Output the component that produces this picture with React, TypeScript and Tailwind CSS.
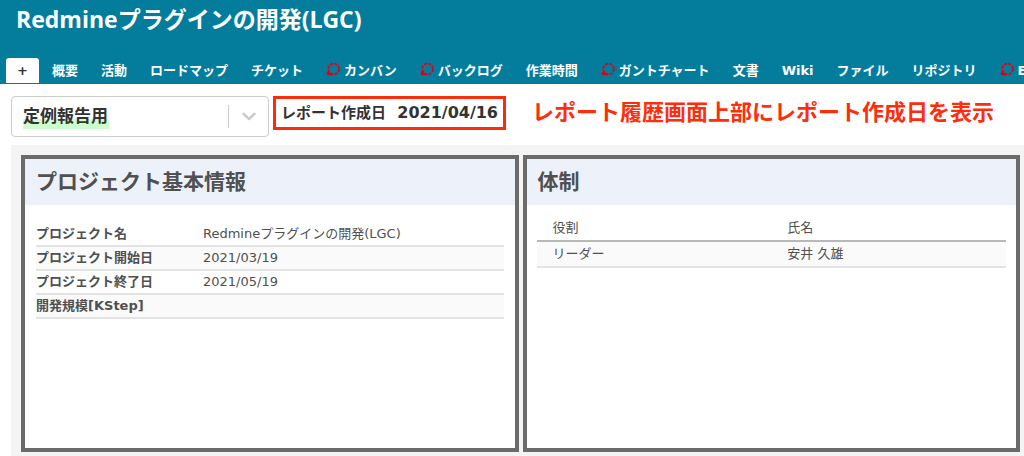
import clsx from 'clsx';
import type { ReactNode } from 'react';

interface MenuItem {
  label: string;
  marked?: boolean;
}

const menuItems: MenuItem[] = [
  { label: '概要' },
  { label: '活動' },
  { label: 'ロードマップ' },
  { label: 'チケット' },
  { label: 'カンバン', marked: true },
  { label: 'バックログ', marked: true },
  { label: '作業時間' },
  { label: 'ガントチャート', marked: true },
  { label: '文書' },
  { label: 'Wiki' },
  { label: 'ファイル' },
  { label: 'リポジトリ' },
  { label: 'EVM', marked: true },
];

const projectInfo = [
  { name: 'プロジェクト名', value: 'Redmineプラグインの開発(LGC)' },
  { name: 'プロジェクト開始日', value: '2021/03/19' },
  { name: 'プロジェクト終了日', value: '2021/05/19' },
  { name: '開発規模[KStep]', value: '' },
];

const members = [{ role: 'リーダー', name: '安井 久雄' }];

// プラグインのロゴ
function PluginMark() {
  return (
    <svg width="14" height="14" viewBox="0 0 14 14" fill="none" className="-mt-1 shrink-0" aria-hidden="true">
      <circle cx="7.6" cy="7" r="5.4" stroke="#e0000f" strokeWidth="1.8" strokeDasharray="2.95 1.29" />
      <path d="M0.6 10.4 L3.6 9.8 L5.6 12.4 L5 13.4 L1 13 Z" fill="#e0000f" />
    </svg>
  );
}

function Panel({ title, children }: { title: string; children: ReactNode }) {
  return (
    <section className="border-4 border-[#6b6b6b] bg-white">
      <h3 className="bg-[#edf1f9] px-[11px] py-2 text-[21px] leading-[30px] font-bold">{title}</h3>
      {children}
    </section>
  );
}

export default function App() {
  return (
    <div className="flex min-h-screen flex-col overflow-hidden bg-white font-['DejaVu_Sans','Noto_Sans_CJK_JP',sans-serif] text-[13px] text-[#505050]">
      {/* ヘッダー */}
      <header className="bg-[#047d9d] text-white">
        <h1 className="px-4 pt-1 pb-6 font-['Open_Sans','Noto_Sans_CJK_JP',sans-serif] text-[23px] leading-[30px] font-bold whitespace-nowrap">
          Redmineプラグインの開発(LGC)
        </h1>
        <nav className="flex items-end gap-[13px] overflow-hidden pl-1.5 font-bold">
          <button
            type="button"
            aria-label="追加"
            className="mb-px h-[25px] w-[33px] shrink-0 rounded-t-[3px] bg-white text-[#333]"
          >
            +
          </button>
          <ul className="flex gap-[23px]">
            {menuItems.map((item) => (
              <li key={item.label} className="shrink-0">
                <a href="#" className="flex h-[26px] items-center gap-1 whitespace-nowrap">
                  {item.marked && <PluginMark />}
                  {item.label}
                </a>
              </li>
            ))}
          </ul>
        </nav>
      </header>

      {/* レポート選択 */}
      <div className="flex items-start gap-1 overflow-hidden pt-3 pb-2 pl-[11px] whitespace-nowrap">
        <div className="relative w-[258px] shrink-0 rounded-[4px] border border-[#ccc]">
          <span className="absolute bottom-[7px] left-[11px] h-[10px] w-[86px] bg-[#ccffcc]" />
          <select
            aria-label="レポート"
            className="relative h-[39px] w-full appearance-none bg-transparent pl-[11px] text-[17px] font-bold text-[#333] outline-none"
          >
            <option>定例報告用</option>
          </select>
          <span className="pointer-events-none absolute inset-y-2 right-0 flex w-10 items-center justify-center border-l border-[#ccc]">
            <svg width="14" height="9" viewBox="0 0 14 9" fill="none" aria-hidden="true">
              <path d="M1.5 1.8 L7 7 L12.5 1.8" stroke="#ccc" strokeWidth="2.6" strokeLinecap="round" strokeLinejoin="round" />
            </svg>
          </span>
        </div>
        <p className="flex h-[34px] w-[233px] shrink-0 items-center justify-between border-[3px] border-[#fa2c0b] px-[5px] font-bold text-[#333]">
          <span className="text-[15px]">レポート作成日</span>
          <span className="text-base">2021/04/16</span>
        </p>
        <p className="pl-[22px] text-[22px] leading-[34px] font-bold text-[#ff2d0a]">
          レポート履歴画面上部にレポート作成日を表示
        </p>
      </div>

      {/* レポート本体 */}
      <main className="ml-[11px] grid flex-1 grid-cols-2 gap-1 bg-[#f4f4f4] pt-[10px] pr-1 pb-1 pl-[10px]">
        <Panel title="プロジェクト基本情報">
          <div className="px-[11px] pt-[17px]">
            <table className="w-full table-fixed border-collapse text-left">
              <tbody>
                {projectInfo.map((row, i) => (
                  <tr key={row.name} className={clsx('h-6 border-b-2 border-[#e3e3e3]', i % 2 === 1 && 'bg-[#fafafa]')}>
                    <th scope="row" className="w-[167px] leading-5 font-bold">{row.name}</th>
                    <td className="leading-5">{row.value}</td>
                  </tr>
                ))}
              </tbody>
            </table>
          </div>
        </Panel>

        <Panel title="体制">
          <div className="px-[10px] pt-[10px]">
            <table className="w-full table-fixed border-collapse text-left">
              <thead>
                <tr className="h-[26px] border-b-2 border-[#b8b8b8]">
                  <th scope="col" className="px-4 leading-5 font-normal">役割</th>
                  <th scope="col" className="px-4 leading-5 font-normal">氏名</th>
                </tr>
              </thead>
              <tbody>
                {members.map((m) => (
                  <tr key={m.name} className="h-[26px] border-b-2 border-[#e3e3e3] bg-[#fafafa]">
                    <td className="px-4 leading-5">{m.role}</td>
                    <td className="px-4 leading-5">{m.name}</td>
                  </tr>
                ))}
              </tbody>
            </table>
          </div>
        </Panel>
      </main>
    </div>
  );
}
